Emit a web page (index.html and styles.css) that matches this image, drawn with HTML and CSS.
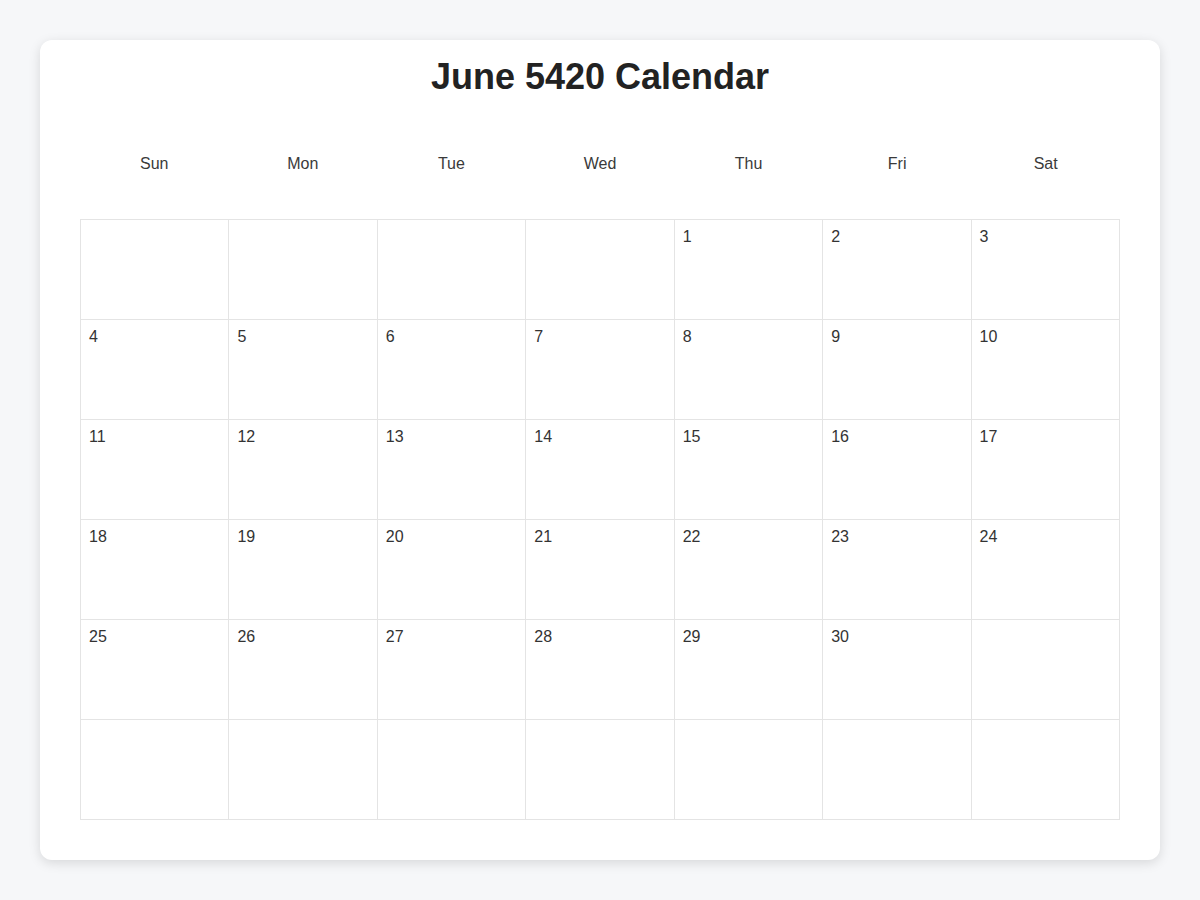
FILE: index.html
```html
<!DOCTYPE html>
<html lang="en">
<head>
<meta charset="utf-8">
<title>June 5420 Calendar</title>
<link rel="stylesheet" href="styles.css">
</head>
<body>
<div class="card">
  <h1 class="title">June 5420 Calendar</h1>
  <div class="weekdays">
    <div>Sun</div><div>Mon</div><div>Tue</div><div>Wed</div><div>Thu</div><div>Fri</div><div>Sat</div>
  </div>
  <div class="grid">
    <div class="cell"></div><div class="cell"></div><div class="cell"></div><div class="cell"></div>
    <div class="cell">1</div><div class="cell">2</div><div class="cell">3</div>
    <div class="cell">4</div><div class="cell">5</div><div class="cell">6</div><div class="cell">7</div>
    <div class="cell">8</div><div class="cell">9</div><div class="cell">10</div>
    <div class="cell">11</div><div class="cell">12</div><div class="cell">13</div><div class="cell">14</div>
    <div class="cell">15</div><div class="cell">16</div><div class="cell">17</div>
    <div class="cell">18</div><div class="cell">19</div><div class="cell">20</div><div class="cell">21</div>
    <div class="cell">22</div><div class="cell">23</div><div class="cell">24</div>
    <div class="cell">25</div><div class="cell">26</div><div class="cell">27</div><div class="cell">28</div>
    <div class="cell">29</div><div class="cell">30</div><div class="cell"></div>
    <div class="cell"></div><div class="cell"></div><div class="cell"></div><div class="cell"></div>
    <div class="cell"></div><div class="cell"></div><div class="cell"></div>
  </div>
</div>
</body>
</html>
```

FILE: styles.css
```css
html, body {
  margin: 0;
  padding: 0;
}
body {
  background: #f6f7f9;
  font-family: "Liberation Sans", Arial, sans-serif;
  color: #333;
}
.card {
  box-sizing: border-box;
  width: 1120px;
  height: 820px;
  margin: 40px;
  padding: 17px 40px 0;
  background: #fff;
  border-radius: 12px;
  box-shadow: 0 3px 12px rgba(0, 0, 0, 0.13);
}
.title {
  margin: 0;
  height: 40px;
  line-height: 40px;
  font-size: 36px;
  font-weight: 700;
  text-align: center;
  color: #222;
}
.weekdays {
  display: grid;
  grid-template-columns: repeat(7, 1fr);
  margin-top: 47px;
  height: 40px;
  line-height: 40px;
  font-size: 16px;
  text-align: center;
  color: #3a3a3a;
}
.grid {
  display: grid;
  grid-template-columns: repeat(7, 1fr);
  grid-auto-rows: 99px;
  gap: 1px;
  padding: 1px;
  margin-top: 35px;
  background: #e4e4e4;
}
.cell {
  background: #fff;
  padding: 8px 8px 6px;
  font-size: 16px;
  line-height: 18px;
  color: #333;
}
```
